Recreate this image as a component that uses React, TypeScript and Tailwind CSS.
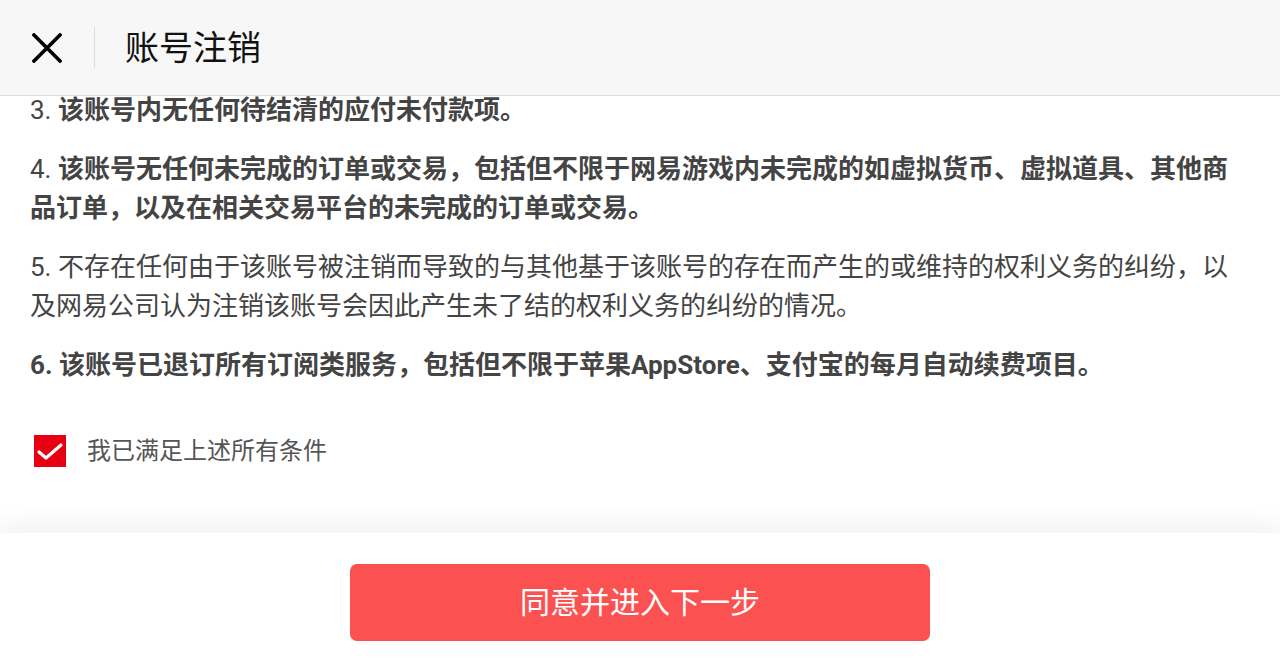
import React from 'react';

const FONT = { fontFamily: 'Roboto, "Noto Sans CJK SC", sans-serif' };

const ITEMS = [
  { no: '3.', text: '该账号内无任何待结清的应付未付款项。', bold: true, boldNo: false },
  {
    no: '4.',
    text: '该账号无任何未完成的订单或交易，包括但不限于网易游戏内未完成的如虚拟货币、虚拟道具、其他商品订单，以及在相关交易平台的未完成的订单或交易。',
    bold: true,
    boldNo: false,
  },
  {
    no: '5.',
    text: '不存在任何由于该账号被注销而导致的与其他基于该账号的存在而产生的或维持的权利义务的纠纷，以及网易公司认为注销该账号会因此产生未了结的权利义务的纠纷的情况。',
    bold: false,
    boldNo: false,
  },
  { no: '6.', text: '该账号已退订所有订阅类服务，包括但不限于苹果AppStore、支付宝的每月自动续费项目。', bold: true, boldNo: true },
];

export default function App() {
  return (
    <div className="w-[1280px] h-[672px] flex flex-col bg-white overflow-hidden" style={FONT}>
      <header className="h-[96px] shrink-0 flex items-center bg-[#f7f7f7] border-b border-[#dedede]">
        <button className="w-[94px] h-full flex items-center justify-center">
          <svg width="30" height="30" viewBox="0 0 30 30" fill="none" stroke="#000" strokeWidth="3.6" strokeLinecap="square">
            <path d="M2 2 L28 28 M28 2 L2 28" />
          </svg>
        </button>
        <div className="w-px h-[41px] bg-[#dcdcdc]" />
        <h1 className="ml-[30px] text-[34px] text-[#111] font-normal leading-none">账号注销</h1>
      </header>

      <main className="flex-1 overflow-hidden px-[30px]">
        {/* list is scrolled a few px under the header */}
        <div className="-mt-[5px] space-y-[20px] text-[26px] leading-[39px] text-[#444]">
          {ITEMS.map((item) => (
            <p key={item.no}>
              <span className={item.boldNo ? 'font-bold' : 'font-normal'}>{item.no} </span>
              <span className={item.bold ? 'font-bold' : 'font-normal'}>{item.text}</span>
            </p>
          ))}
        </div>

        <label className="mt-[48px] flex items-center">
          <span className="ml-[4px] w-[32px] h-[32px] bg-[#e60012] flex items-center justify-center">
            <svg width="28" height="22" viewBox="0 0 28 22" fill="none" stroke="#fff" strokeWidth="3.2" strokeLinecap="round" strokeLinejoin="round">
              <path d="M3 12 L10 18 L25 5" />
            </svg>
          </span>
          <span className="ml-[21px] text-[24px] text-[#555]">我已满足上述所有条件</span>
        </label>
      </main>

      <footer className="h-[139px] shrink-0 bg-white flex justify-center pt-[31px] shadow-[0_-10px_22px_rgba(0,0,0,0.05)] relative">
        <button className="w-[580px] h-[77px] rounded-[7px] bg-[#fc5151] text-white text-[30px] font-normal">
          同意并进入下一步
        </button>
      </footer>
    </div>
  );
}
